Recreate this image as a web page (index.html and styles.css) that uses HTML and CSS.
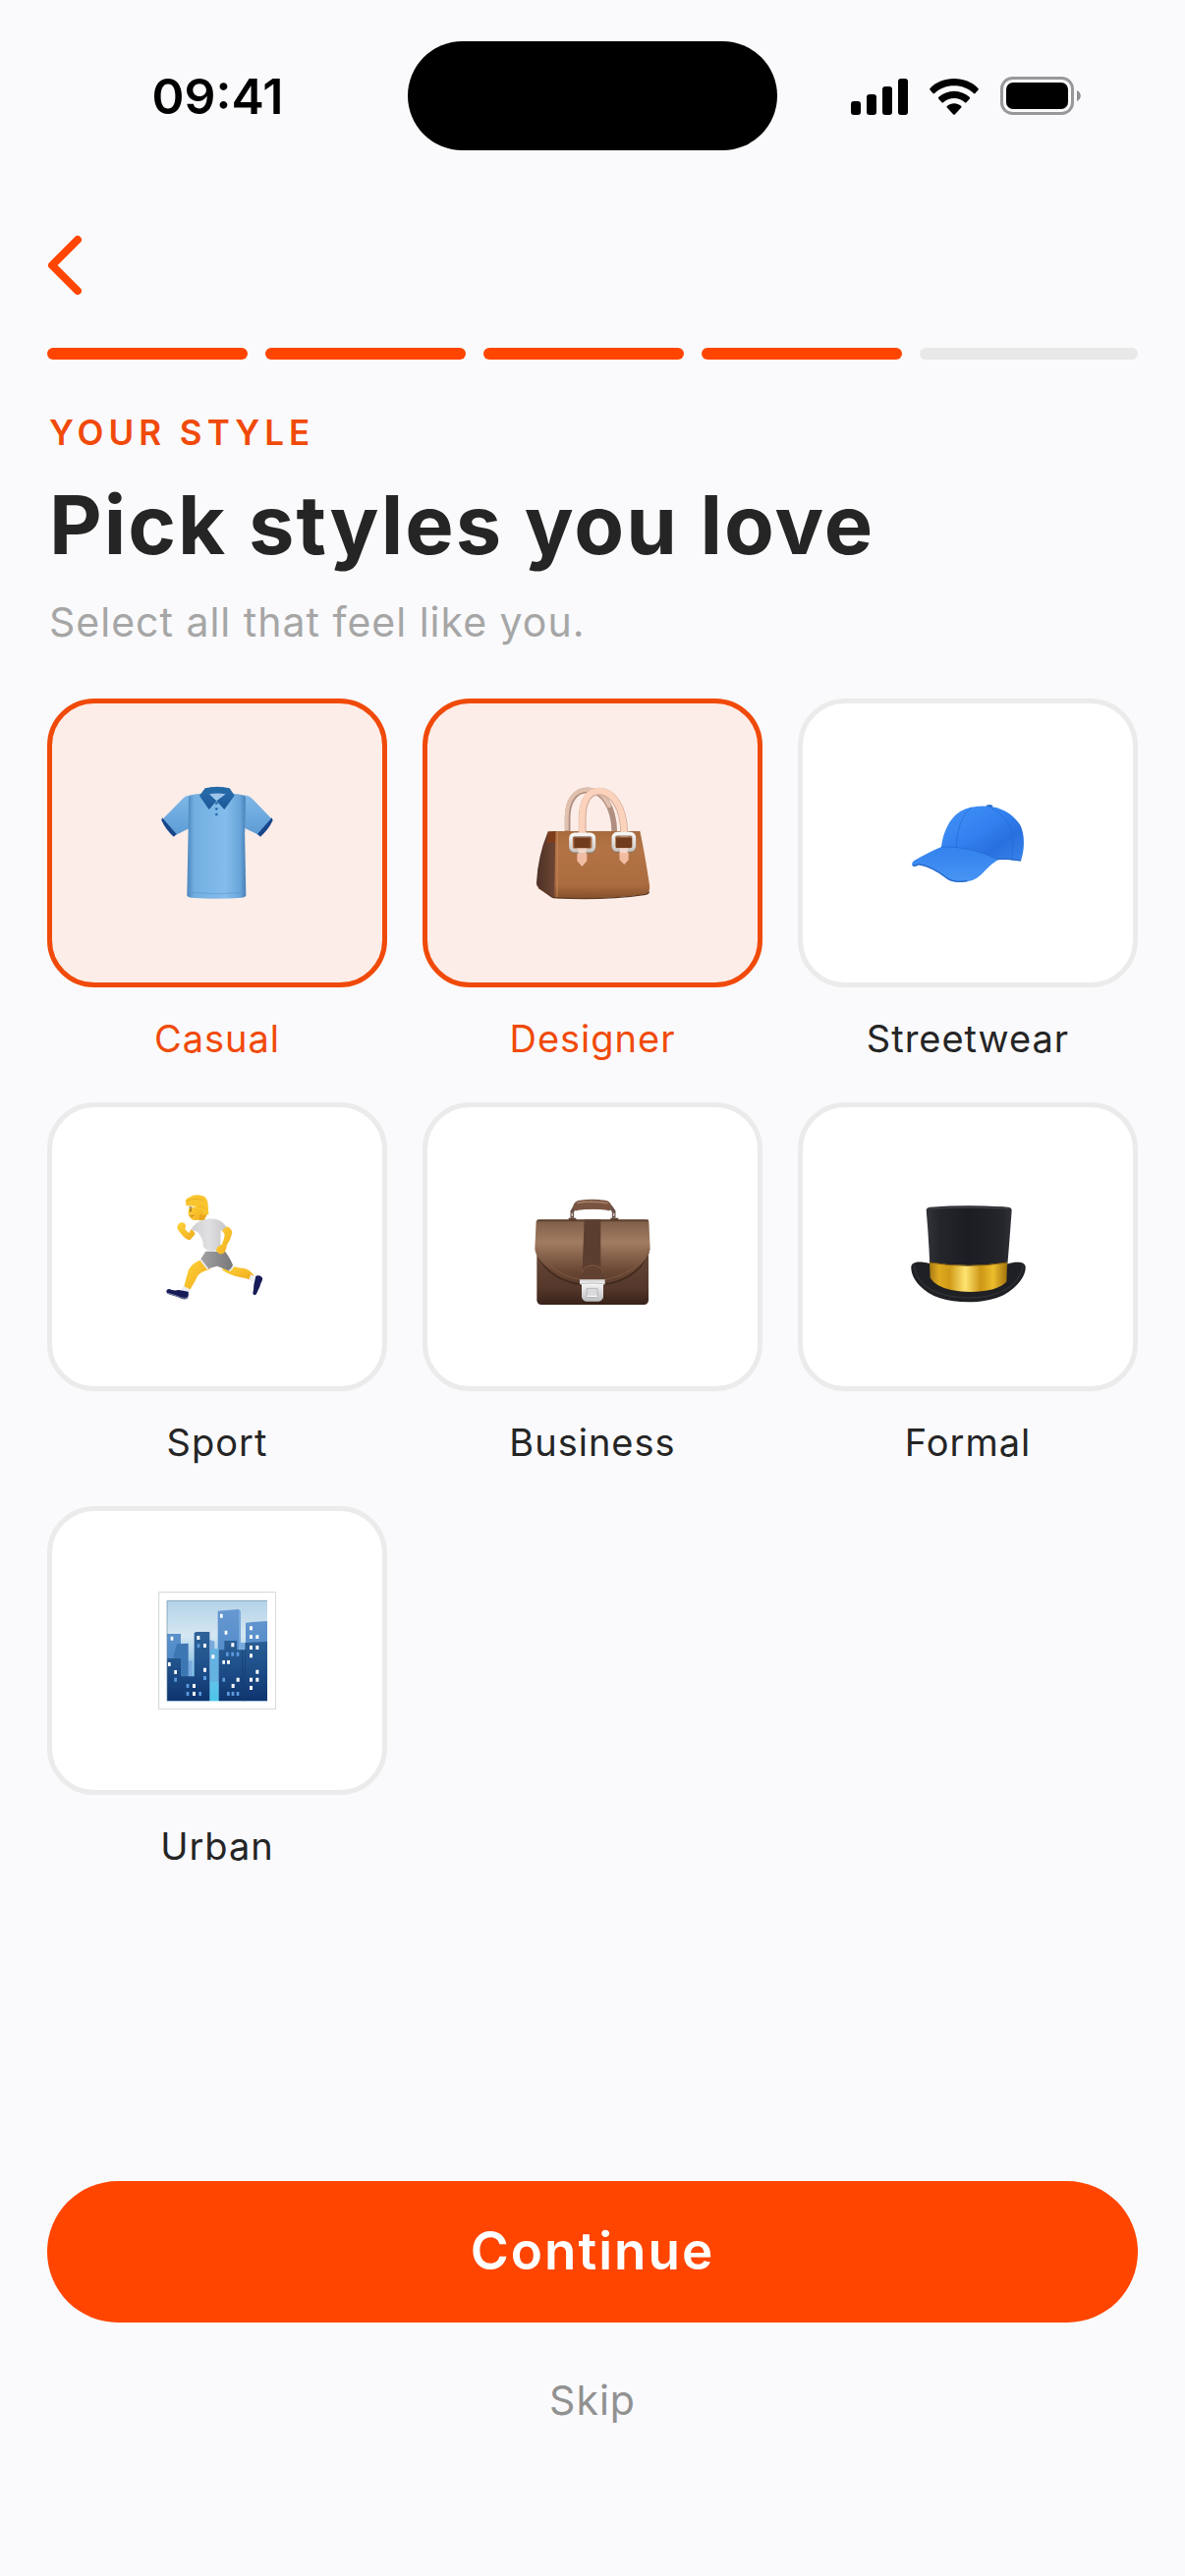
FILE: index.html
```
<!DOCTYPE html>
<html lang="en">
<head>
  <meta charset="UTF-8">
  <meta name="viewport" content="width=device-width, initial-scale=1">
  <title>Pick styles you love</title>
  <link rel="stylesheet" href="styles.css">
</head>
<body>

  <div class="status-bar">
    <span class="status-time">09:41</span>
    <div class="island"></div>
    <div class="status-icons">
      <svg width="58" height="38" viewBox="0 0 58 38" aria-hidden="true">
        <rect x="0" y="24" width="10" height="14" rx="3"/>
        <rect x="16" y="17" width="10" height="21" rx="3"/>
        <rect x="32" y="9" width="10" height="29" rx="3"/>
        <rect x="48" y="1" width="10" height="37" rx="3"/>
      </svg>
      <svg width="50" height="38" viewBox="0 0 150 114" aria-hidden="true">
        <path d="M75 3C46 3 20 14 2 32q-3 3 0 6l8 9q3 3 6 0C32 33 52 25 75 25s43 8 59 22q3 3 6 0l8-9q3-3 0-6C130 14 104 3 75 3z"/>
        <path d="M75 41C57 41 41 48 28 59q-3 3 0 6l9 10q3 3 6 0c9-8 20-12 32-12s23 4 32 12q3 3 6 0l9-10q3-3 0-6C109 48 93 41 75 41z"/>
        <path d="M75 79c-8 0-15 3-21 7q-3 3 0 6l18 20q3 3 6 0l18-20q3-3 0-6c-6-4-13-7-21-7z"/>
      </svg>
      <svg width="82" height="40" viewBox="0 0 82 40" aria-hidden="true">
        <rect x="1.5" y="1.5" width="72" height="36" rx="11" fill="none" stroke="#98989a" stroke-width="3"/>
        <rect x="6" y="6" width="63" height="27" rx="7"/>
        <path d="M78 14c5 2 5 9 0 11z" fill="#8e8e90"/>
      </svg>
    </div>
  </div>

  <header>
    <button class="back-btn" type="button" aria-label="Back">
      <svg width="36" height="62" viewBox="0 0 36 62" aria-hidden="true">
        <path d="M31 5L5 31l26 26"/>
      </svg>
    </button>
    <div class="progress" role="progressbar" aria-label="Step" aria-valuemin="0" aria-valuemax="5" aria-valuenow="4">
      <span class="step done"></span>
      <span class="step done"></span>
      <span class="step done"></span>
      <span class="step done"></span>
      <span class="step"></span>
    </div>
  </header>

  <main>
    <div class="intro">
      <p class="eyebrow">YOUR STYLE</p>
      <h1>Pick styles you love</h1>
      <p class="subtitle">Select all that feel like you.</p>
    </div>

    <div class="styles-grid">
      <label class="style-option">
        <input type="checkbox" name="style" value="casual" checked>
        <span class="tile">
          <svg class="emoji" viewBox="33 54 360 360" aria-hidden="true">
            <defs>
              <linearGradient id="shirtBody">
                <stop offset="0" stop-color="#4b86bd"/>
                <stop offset=".12" stop-color="#72aee0"/>
                <stop offset=".65" stop-color="#84bdec"/>
                <stop offset=".9" stop-color="#69a5da"/>
                <stop offset="1" stop-color="#467fb5"/>
              </linearGradient>
              <linearGradient id="shirtSleeve" x1="0" y1="0" x2="0" y2="1">
                <stop offset="0" stop-color="#7fb8e8"/>
                <stop offset="1" stop-color="#5c9bd3"/>
              </linearGradient>
              <linearGradient id="shirtCollar" x1="0" y1="0" x2="0" y2="1">
                <stop offset="0" stop-color="#2a70ae"/>
                <stop offset="1" stop-color="#1c5699"/>
              </linearGradient>
            </defs>
            <path d="M132 88q-16 2-25 12L46 162l36 50 48-24zM296 88q16 2 25 12l60 62-36 50-49-24z" fill="url(#shirtSleeve)"/>
            <path d="M45 157l44 50-9 8q-24-22-37-50zM380 157l-44 50 9 8q25-22 38-50z" fill="#18468a"/>
            <path d="M126 94q4-7 14-8l32-4h82l34 5q9 1 12 8l-3 90 4 210q-2 5-12 6-75 6-155 0-11-1-13-6l4-210z" fill="url(#shirtBody)"/>
            <path d="M128 95v105M297 95v105" stroke="#4f8cc3" stroke-width="2" opacity=".7"/>
            <path d="M128 385q84 9 172 0" fill="none" stroke="#5b9ad1" stroke-width="2"/>
            <path d="M188 82h51l-27 38z" fill="#9dc4ea"/>
            <path d="M176 67q37-9 75 0l15 22-31 43-24-26 28-21q-26-5-50 0l22 21-23 26-29-42z" fill="url(#shirtCollar)"/>
            <path d="M176 68q37-8 74 0l4 12q-42-8-81 0z" fill="#246aa5"/>
            <g fill="#2668ac"><circle cx="211" cy="113" r="4"/><circle cx="211" cy="130" r="4"/><circle cx="211" cy="147" r="4"/></g>
          </svg>
        </span>
        <span class="style-name">Casual</span>
      </label>

      <label class="style-option">
        <input type="checkbox" name="style" value="designer" checked>
        <span class="tile">
          <svg class="emoji" viewBox="39 54 360 360" aria-hidden="true">
            <defs>
              <linearGradient id="bagFront" x1="0" y1="0" x2="0" y2="1">
                <stop offset="0" stop-color="#a86a3c"/>
                <stop offset=".25" stop-color="#b37345"/>
                <stop offset=".8" stop-color="#ab6c3f"/>
                <stop offset="1" stop-color="#85502d"/>
              </linearGradient>
              <linearGradient id="bagSide">
                <stop offset="0" stop-color="#4e3127"/>
                <stop offset="1" stop-color="#704735"/>
              </linearGradient>
              <linearGradient id="buckle" x1="0" y1="0" x2="0" y2="1">
                <stop offset="0" stop-color="#f6f5f3"/>
                <stop offset="1" stop-color="#cdc8c4"/>
              </linearGradient>
            </defs>
            <path d="M143 200v-42C143 106 166 73 204 73c46 0 80 48 82 127" fill="none" stroke="#b08f81" stroke-width="17"/>
            <path d="M140 196v-40C141 103 164 71 204 71c30 0 54 20 68 54" fill="none" stroke="#e0c0ae" stroke-width="12"/>
            <path d="M82 202l30-3v200q-8 7-20 0l-39-30q-6-5-5-14 4-80 34-153z" fill="url(#bagSide)"/>
            <path d="M83 199l25-1v37q-15-6-27 1z" fill="#7d3d1c"/>
            <path d="M106 198h258q16 76 29 164 3 24-12 29-110 15-270 12-12-1-8-18z" fill="url(#bagFront)"/>
            <path d="M112 199l-1 200" stroke="#c68b5e" stroke-width="4" opacity=".7"/>
            <path d="M54 370l45 31q150 9 282-10 8-2 11-8" fill="none" stroke="#5f3923" stroke-width="4"/>
            <path d="M188 204v-46C189 108 206 77 238 77c42 0 76 45 78 127" fill="none" stroke="#cfa591" stroke-width="23"/>
            <path d="M187 204v-46C188 107 205 75 238 75c42 0 76 46 78 129" fill="none" stroke="#fbd3bd" stroke-width="19"/>
            <g>
              <path d="M163 218h49v31h-49z" fill="#713c1e"/>
              <path d="M176 200h24v15h-24zM172 250h30v39l-15 17-15-17z" fill="#f0bda3"/>
              <rect x="153" y="211" width="70" height="49" rx="11" fill="none" stroke="#8b7466" stroke-width="11"/>
              <rect x="153" y="208" width="70" height="49" rx="11" fill="none" stroke="url(#buckle)" stroke-width="11"/>
              <path d="M176 253h23v13h-23z" fill="#f7d7c8"/>
            </g>
            <g>
              <path d="M291 218h48v31h-48z" fill="#713c1e"/>
              <path d="M304 200h24v15h-24zM300 250h29v36l-13 14-14-14z" fill="#f0bda3"/>
              <rect x="283" y="209" width="63" height="49" rx="11" fill="none" stroke="#8b7466" stroke-width="11"/>
              <rect x="283" y="206" width="63" height="49" rx="11" fill="none" stroke="url(#buckle)" stroke-width="11"/>
              <path d="M303 251h23v13h-23z" fill="#f7d7c8"/>
            </g>
          </svg>
        </span>
        <span class="style-name">Designer</span>
      </label>

      <label class="style-option">
        <input type="checkbox" name="style" value="streetwear">
        <span class="tile">
          <svg class="emoji" viewBox="45 24 360 360" aria-hidden="true">
            <defs>
              <linearGradient id="capCrown" x1="0" y1="0" x2="1" y2="1">
                <stop offset="0" stop-color="#4293f6"/>
                <stop offset=".45" stop-color="#3381f0"/>
                <stop offset=".7" stop-color="#2870df"/>
                <stop offset="1" stop-color="#3983ea"/>
              </linearGradient>
              <linearGradient id="capBrim" x1="0" y1="0" x2="0" y2="1">
                <stop offset="0" stop-color="#3382ef"/>
                <stop offset="1" stop-color="#4794f3"/>
              </linearGradient>
            </defs>
            <ellipse cx="291" cy="92" rx="10" ry="5" fill="#2868c8"/>
            <path d="M144 216c10-72 45-113 91-121 74-12 121 10 149 53 14 24 16 70 4 107q-3 6-11 4-33-7-62-4z" fill="url(#capCrown)"/>
            <path d="M235 95q-42 36-46 121M291 94q62 28 71 88 3 30-3 75" fill="none" stroke="#2468cf" stroke-width="2"/>
            <path d="M144 216q88-4 173 39-20 13-36 30-30 35-58 37-38 6-58-7-48-38-91-45-10 7-18 4-5-8 5-16 45-26 83-42z" fill="url(#capBrim)"/>
            <path d="M57 272q8 4 17-3 43 7 91 45 21 12 58 6" fill="none" stroke="#2464c5" stroke-width="4"/>
            <path d="M144 216q88-4 173 39" fill="none" stroke="#276fd8" stroke-width="3"/>
            <path d="M315 254q42-3 73 4" fill="none" stroke="#2562c8" stroke-width="3"/>
          </svg>
        </span>
        <span class="style-name">Streetwear</span>
      </label>

      <label class="style-option">
        <input type="checkbox" name="style" value="sport">
        <span class="tile">
          <svg class="emoji" viewBox="3 27 360 360" aria-hidden="true">
            <defs>
              <linearGradient id="skin" x1="0" y1="0" x2="1" y2="1">
                <stop offset="0" stop-color="#ffd43a"/>
                <stop offset="1" stop-color="#f0aa1c"/>
              </linearGradient>
              <linearGradient id="tee">
                <stop offset="0" stop-color="#cfcfd1"/>
                <stop offset=".5" stop-color="#e0e0e2"/>
                <stop offset="1" stop-color="#c6c6c9"/>
              </linearGradient>
              <linearGradient id="shorts">
                <stop offset="0" stop-color="#a2a2a4"/>
                <stop offset="1" stop-color="#77777a"/>
              </linearGradient>
            </defs>
            <path d="M212 262q22 8 57 12 14 5 27 20l-5 18q-17-10-35-11-35-6-59-24z" fill="url(#skin)"/>
            <path d="M137 246l25 29q-29 8-38 20-8 18-25 45l-18-8q6-25 15-55 13-23 41-31z" fill="url(#skin)"/>
            <path d="M80 326l22 12-5 13-25-12zM286 292l13 5-5 19-14-9z" fill="#eeeef3"/>
            <path d="M37 336q12 7 29 3l29 5q2 8-2 20-6 5-17 2-16-8-34-12-18-5-13-14 3-4 8-4z" fill="#171c58"/>
            <path d="M30 349q20 3 41 13 14 5 22 0" fill="none" stroke="#8085a7" stroke-width="3"/>
            <path d="M301 296q10-3 18 3 5 4 1 12-4 6-7 18l-10 22q-8 8-11-2 3-15 3-26z" fill="#171c58"/>
            <path d="M208 222q17 24 24 44l-11 15-38-15-31 9-20-29 16-25z" fill="url(#shorts)"/>
            <path d="M132 246l23 30M220 281q9-6 13-16" stroke="#eeeef0" stroke-width="5" fill="none"/>
            <path d="M106 151l10 17-16 19q-13-2-25-17l-13-16q-3-15 10-21 14 0 15 10l-2 11 11 11z" fill="url(#skin)"/>
            <path d="M102 155q14-23 36-30 28-7 50 1 12 4 24 22l-13 13-5-6-1 52q-15 17-32 13-16-3-21-16 2-19-16-42z" fill="url(#tee)"/>
            <path d="M198 157l16-12q14 8 15 19-5 22-17 39-1 18-11 25-14 4-21-10 2-13 17-18 7-13 9-30z" fill="url(#skin)"/>
            <path d="M97 89q-5 10 0 24 8 16 26 12l19-2q7-4 11-16l-11-28z" fill="url(#skin)"/>
            <path d="M132 105q10 14 18 3l-6 17-17 2z" fill="#e8a51d"/>
            <path d="M88 77q-6-16 10-21 17-11 39-5 17 4 18 28l2 29q-9 2-17-3l-4-15-8 8-6-14-34-2z" fill="#f9c52f"/>
            <path d="M90 68q23-12 52-3M124 85q17-4 25 9" fill="none" stroke="#e7a61f" stroke-width="2"/>
            <path d="M98 86l8 2M102 91v9" stroke="#593c1e" stroke-width="3" fill="none"/>
            <path d="M100 113q8 2 13-2" stroke="#9b5425" stroke-width="2" fill="none"/>
          </svg>
        </span>
        <span class="style-name">Sport</span>
      </label>

      <label class="style-option">
        <input type="checkbox" name="style" value="business">
        <span class="tile">
          <svg class="emoji" viewBox="39 27 360 360" aria-hidden="true">
            <defs>
              <linearGradient id="caseBody" x1="0" y1="0" x2="0" y2="1">
                <stop offset="0" stop-color="#765440"/>
                <stop offset=".8" stop-color="#55382b"/>
                <stop offset="1" stop-color="#382119"/>
              </linearGradient>
              <linearGradient id="caseFlap" x1="0" y1="0" x2="0" y2="1">
                <stop offset="0" stop-color="#7e5d48"/>
                <stop offset=".35" stop-color="#a17c62"/>
                <stop offset=".8" stop-color="#694733"/>
                <stop offset="1" stop-color="#5b3d2c"/>
              </linearGradient>
              <linearGradient id="lock" x1="0" y1="0" x2="0" y2="1">
                <stop offset="0" stop-color="#d2d2d3"/>
                <stop offset=".2" stop-color="#f4f4f5"/>
                <stop offset="1" stop-color="#bdbdc0"/>
              </linearGradient>
            </defs>
            <path d="M157 119V99l8-13h110l9 13v20" fill="none" stroke="#685047" stroke-width="11"/>
            <path d="M157 104v10M284 104v10" stroke="#c7bcb5" stroke-width="5"/>
            <path d="M160 82q4-15 20-17 38-5 77 0 16 2 20 17l-4 13q-5 3-10 0-44-5-87 0-6 4-13 0z" fill="#795440"/>
            <path d="M172 73q47-8 94 1" fill="none" stroke="#a37c65" stroke-width="5"/>
            <rect x="49" y="128" width="341" height="256" rx="14" fill="url(#caseBody)"/>
            <path d="M49 224q38 98 170 101 132-3 171-101" fill="none" stroke="#402a1e" stroke-width="5"/>
            <path d="M47 129q3-5 12-5h320q10 0 12 6l4 84q-2 16-20 39-55 68-156 68-103-2-157-69-18-22-19-38z" fill="url(#caseFlap)"/>
            <path d="M49 210q4 17 26 41 52 58 144 60 95-2 147-60 21-21 24-41" fill="none" stroke="#856149" stroke-width="2"/>
            <path d="M194 124h50v152h-56l3-76z" fill="#5b3e2f"/>
            <path d="M183 309v-14q4-31 36-31 33 0 36 31v15z" fill="#61412f"/>
            <path d="M186 287q6-22 33-23 27 1 33 23" fill="none" stroke="#8a6650" stroke-width="2"/>
            <path d="M50 127h340M146 122h23M274 122h24" stroke="#5c4130" stroke-width="5"/>
            <path d="M180 307h77v14l-5 2v38q-3 12-14 13h-38q-11-1-14-13v-38l-6-2z" fill="url(#lock)"/>
            <path d="M180 320q38-4 77 0" fill="none" stroke="#aaa" stroke-width="2"/>
            <rect x="201" y="334" width="34" height="27" rx="3" fill="#d9d9db" stroke="#a4a4a8" stroke-width="2"/>
            <path d="M203 358h31" stroke="#fff" stroke-width="3"/>
          </svg>
        </span>
        <span class="style-name">Business</span>
      </label>

      <label class="style-option">
        <input type="checkbox" name="style" value="formal">
        <span class="tile">
          <svg class="emoji" viewBox="45 -3 360 360" aria-hidden="true">
            <defs>
              <linearGradient id="hatCrown">
                <stop offset="0" stop-color="#33343a"/>
                <stop offset=".15" stop-color="#24262c"/>
                <stop offset=".5" stop-color="#1b1d23"/>
                <stop offset=".9" stop-color="#24262b"/>
                <stop offset="1" stop-color="#303137"/>
              </linearGradient>
              <linearGradient id="hatBand">
                <stop offset="0" stop-color="#a87812"/>
                <stop offset=".12" stop-color="#deaa20"/>
                <stop offset=".26" stop-color="#d09a18"/>
                <stop offset=".46" stop-color="#ffe472"/>
                <stop offset=".66" stop-color="#cd9716"/>
                <stop offset=".82" stop-color="#ecbd2c"/>
                <stop offset="1" stop-color="#a3720d"/>
              </linearGradient>
            </defs>
            <path d="M52 238C54 222 78 220 107 228l118 20 120-18c28-9 54-8 56 8 1 16-8 36-26 55-36 38-84 53-148 53-66 0-116-15-151-52-17-18-25-39-24-56z" fill="#1f2024"/>
            <path d="M60 231c6 40 26 64 58 80 60 28 152 30 214 1 34-17 56-44 62-80" fill="none" stroke="#303137" stroke-width="4"/>
            <path d="M98 65q1-8 12-9 119-8 237 0 12 1 12 10-6 84-14 178-116 37-236 0Q106 150 98 65z" fill="url(#hatCrown)"/>
            <path d="M106 61q124-8 246 0" fill="none" stroke="#404248" stroke-width="4"/>
            <path d="M108 224q119 20 237 0l-2 60q-22 23-76 29-48 5-93-4-48-11-64-37z" fill="url(#hatBand)"/>
            <path d="M107 225q119 20 238 0" fill="none" stroke="#775512" stroke-width="3"/>
          </svg>
        </span>
        <span class="style-name">Formal</span>
      </label>

      <label class="style-option">
        <input type="checkbox" name="style" value="urban">
        <span class="tile">
          <svg class="emoji" viewBox="33 45 360 360" aria-hidden="true">
            <defs>
              <linearGradient id="sky" x1="0" y1="0" x2="0" y2="1">
                <stop offset="0" stop-color="#b3d2e8"/>
                <stop offset=".35" stop-color="#d5e7f2"/>
                <stop offset=".65" stop-color="#8fc4e8"/>
                <stop offset="1" stop-color="#4fcdf0"/>
              </linearGradient>
              <linearGradient id="tower" x1="0" y1="0" x2="0" y2="1">
                <stop offset="0" stop-color="#2f6399"/>
                <stop offset=".5" stop-color="#1f508a"/>
                <stop offset="1" stop-color="#0e346e"/>
              </linearGradient>
              <linearGradient id="farTower" x1="0" y1="0" x2="0" y2="1">
                <stop offset="0" stop-color="#6798d0"/>
                <stop offset="1" stop-color="#4f8ac8"/>
              </linearGradient>
            </defs>
            <rect x="35" y="47" width="357" height="357" fill="#fff" stroke="#ced7d6" stroke-width="3"/>
            <rect x="60" y="72" width="306" height="307" fill="url(#sky)"/>
            <path d="M60 174h42v80H60zM215 104l64-5v130h-64zM300 140l66-5v75h-66z" fill="url(#farTower)"/>
            <path d="M279 99l6 6v96h15v100h-21zM190 192l15 5v23h14v100h-29zM115 256h22v60h-22z" fill="#79aadd"/>
            <path d="M90 205l35-2v110H80v-74z" fill="#3d77b3"/>
            <path d="M60 249h42v55h41V171l6-3h41v211H60zM218 223h17v-28h38v28h17v156h-72zM290 223h10v-22l66-3v181h-76z" fill="url(#tower)"/>
            <path d="M290 223v156M300 201l-4 178" stroke="#173c70" stroke-width="2"/>
            <rect x="192" y="220" width="24" height="159" fill="#4bbce7" opacity=".45"/>
            <g fill="#fff">
              <path d="M222 113h8v12h-8zM236 164h8v12h-8zM71 182h8v12h-8zM63 261h8v12h-8zM82 285h8v12h-8zM151 180h9v12h-9zM171 204h9v12h-9zM171 278h9v12h-9zM138 327h9v12h-9zM138 351h9v12h-9zM196 238h9v12h-9z"/>
              <path d="M256 202h9v12h-9zM229 255h8v11h-8zM243 255h9v11h-9zM272 308h9v12h-9zM257 327h9v12h-9zM312 151h9v12h-9zM312 178h9v11h-9zM331 178h9v11h-9zM312 210h9v12h-9zM331 210h9v12h-9zM312 235h9v12h-9zM331 284h9v12h-9zM312 308h9v12h-9zM331 308h9v12h-9zM312 333h9v12h-9z"/>
            </g>
            <path d="M82 308h8v12h-8zM119 327h8v12h-8zM119 351h8v12h-8zM157 351h8v12h-8zM152 205h8v11h-8zM171 303h9v12h-9zM240 230h8v12h-8zM256 230h8v12h-8zM272 230h8v12h-8zM229 308h8v12h-8zM243 351h8v12h-8zM257 351h8v12h-8zM272 351h8v12h-8z" fill="#5b9be0"/>
            <path d="M60 379V73h306" fill="none" stroke="#6d8da0" stroke-width="2"/>
          </svg>
        </span>
        <span class="style-name">Urban</span>
      </label>
    </div>
  </main>

  <footer>
    <button class="continue-btn" type="button">Continue</button>
    <button class="skip-btn" type="button">Skip</button>
  </footer>

</body>
</html>
```
FILE: styles.css
```
:root {
  --bg-color: #fafafc;
  --text-color: #252525;
  --accent-color: #ff4500;
  --accent-dark: #f04a0a;
  --accent-soft: #fcede8;
  --border-color: #ebebeb;
}

* {
  box-sizing: border-box;
}

body {
  font-family: Inter, "Liberation Sans", sans-serif;
  background-color: var(--bg-color);
  color: var(--text-color);
  letter-spacing: 1px;
  margin: 0;
  min-height: 100vh;
  display: flex;
  flex-direction: column;
}

button {
  font-family: inherit;
  letter-spacing: inherit;
  border: none;
  padding: 0;
  background: none;
  cursor: pointer;
}

/* Status bar */
.status-bar {
  display: grid;
  grid-template-columns: 1fr auto 1fr;
  align-items: center;
  padding: 42px 0;
  color: #000;
}

.status-time {
  justify-self: center;
  padding-left: 28px;
  font-size: 50px;
  line-height: 60px;
  font-weight: 600;
  letter-spacing: normal;
}

.island {
  width: 376px;
  height: 111px;
  border-radius: 56px;
  background: #000;
}

.status-icons {
  display: flex;
  justify-content: center;
  align-items: center;
  gap: 22px;
  padding-right: 32px;
}

/* Header */
header {
  padding: 44px 48px 0;
}

.back-btn {
  display: block;
}

.back-btn svg {
  display: block;
  fill: none;
  stroke: var(--accent-color);
  stroke-width: 8;
  stroke-linecap: round;
  stroke-linejoin: round;
}

.progress {
  display: grid;
  grid-template-columns: repeat(5, 1fr);
  margin-top: 53px;
}

.step {
  height: 12px;
  border-radius: 6px;
  background: #e8e8e8;
}

.step.done {
  margin-right: 18px;
  background: var(--accent-color);
}

/* Content */
main {
  padding: 48px 48px 0;
}

.intro {
  padding-left: 2px;
}

.eyebrow {
  margin: 0;
  color: var(--accent-dark);
  font-size: 35px;
  line-height: 52px;
  font-weight: 600;
  letter-spacing: 5px;
}

h1 {
  margin: 16px 0 0;
  font-size: 83px;
  line-height: 104px;
  font-weight: 700;
  letter-spacing: 2px;
}

.subtitle {
  margin: 21px 0 0;
  color: #a6a6a6;
  font-size: 41px;
  line-height: 52px;
}

.styles-grid {
  display: grid;
  grid-template-columns: repeat(3, 1fr);
  gap: 39px 36px;
  margin-top: 52px;
}

.style-option {
  position: relative;
  display: flex;
  flex-direction: column;
  gap: 26px;
  text-align: center;
  cursor: pointer;
}

.style-option input {
  position: absolute;
  opacity: 0;
}

.tile {
  display: flex;
  justify-content: center;
  align-items: center;
  height: 294px;
  background: #fff;
  border: 5px solid var(--border-color);
  border-radius: 48px;
}

.emoji {
  width: 120px;
  height: 120px;
}

.style-name {
  font-size: 38px;
  line-height: 52px;
}

.style-option input:checked ~ .tile {
  background: var(--accent-soft);
  border-color: var(--accent-dark);
}

.style-option input:checked ~ .style-name {
  color: var(--accent-dark);
}

.style-option input:focus-visible ~ .tile {
  outline: 4px solid var(--accent-color);
  outline-offset: 4px;
}

/* Actions */
footer {
  display: flex;
  flex-direction: column;
  align-items: center;
  margin-top: auto;
  padding: 48px 48px 153px;
}

.continue-btn {
  width: 100%;
  height: 144px;
  padding-bottom: 2px;
  border-radius: 72px;
  background: var(--accent-color);
  color: #fff;
  font-size: 53px;
  font-weight: 600;
  letter-spacing: 2px;
}

.skip-btn {
  margin-top: 53px;
  color: #919191;
  font-size: 41px;
  line-height: 52px;
}
```
